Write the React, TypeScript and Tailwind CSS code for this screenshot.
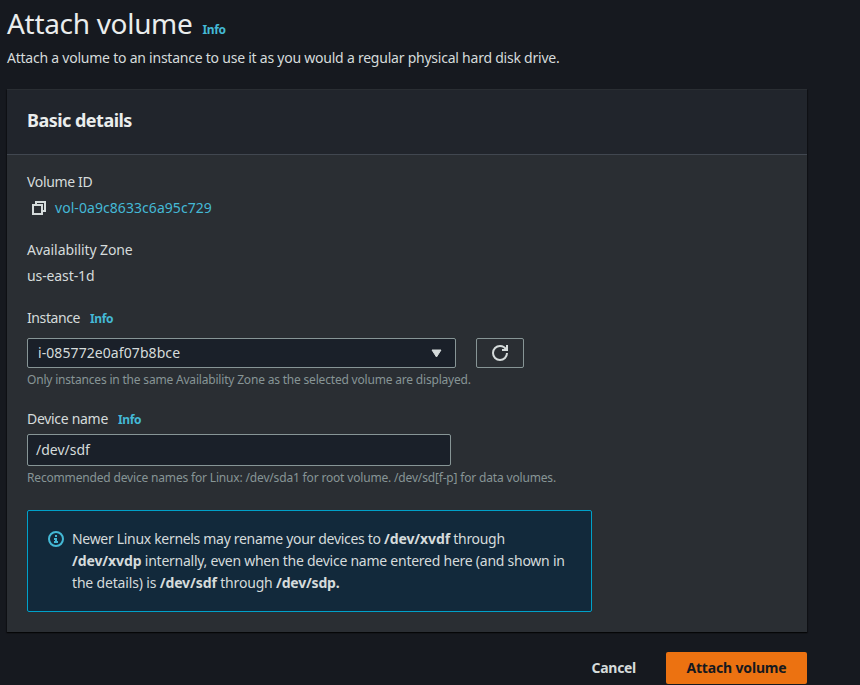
import type { ReactNode } from "react";

function Info({ className = "" }: { className?: string }) {
  return (
    <a className={`text-[12px] font-bold tracking-[-0.4px] text-[#44b9d6] ${className}`}>Info</a>
  );
}

function Line({ className = "", children }: { className?: string; children: ReactNode }) {
  return <div className={`whitespace-nowrap leading-[22px] ${className}`}>{children}</div>;
}

function CopyIcon() {
  return (
    <svg className="h-4 w-4 shrink-0" viewBox="0 0 16 16" fill="none" stroke="#d5dbdb" strokeWidth="2">
      <path d="M2 5h9v9H2zM5 5V2h9v9h-3" />
    </svg>
  );
}

function RefreshIcon() {
  return (
    <svg className="h-4 w-4 overflow-visible" viewBox="0 0 16 16" fill="none" stroke="#d5dbdb" strokeWidth="2">
      <path d="M15 8c0 3.870-3.130 7-7 7s-7-3.130-7-7 3.130-7 7-7c2.790 0 5.200 1.630 6.330 4" />
      <path d="M10 5h5V0" />
    </svg>
  );
}

function InfoIcon() {
  return (
    <svg className="mt-[3px] h-4 w-4 shrink-0" viewBox="0 0 16 16" fill="none" stroke="#44b9d6" strokeWidth="2">
      <circle cx="8" cy="8" r="7" />
      <path d="M7 5h2M6 8h2v3M6 11h4" />
    </svg>
  );
}

export default function App() {
  return (
    <main className="h-[685px] w-[860px] overflow-hidden bg-[#16191f] pl-[7px] font-['Noto_Sans','Open_Sans',sans-serif] text-[14px] text-[#d5dbdb]">
      <header className="flex h-[89px] flex-col pt-[5px]">
        <div className="flex items-baseline">
          <h1 className="text-[28px] leading-9 tracking-[-0.31px] text-[#eaeded]">Attach volume</h1>
          <Info className="ml-[10px]" />
        </div>
        <Line className="mt-[6px] tracking-[-0.232px]">
          Attach a volume to an instance to use it as you would a regular physical hard disk drive.
        </Line>
      </header>
      <section className="h-[543px] w-[800px] bg-[#2a2e33] shadow-[0_1px_1px_0_#0008,1px_1px_1px_0_#0004,-1px_1px_1px_0_#0004]">
        <div className="flex h-[66px] items-center border-t border-b border-t-[#2a2e33] border-b-[#414750] bg-[#21252c] px-5 pb-1">
          <h2 className="text-[18px] leading-[22px] font-bold tracking-[-0.52px] text-[#eaeded]">Basic details</h2>
        </div>
        <div className="flex flex-col px-5 pt-4">
          <Line className="tracking-[-0.35px]">Volume ID</Line>
          <Line className="mt-1 flex items-center gap-2 pl-1">
            <CopyIcon />
            <a className="tracking-[0.06px] text-[#44b9d6]">vol-0a9c8633c6a95c729</a>
          </Line>
          <Line className="mt-5 tracking-[-0.1px]">Availability Zone</Line>
          <Line className="mt-1 tracking-[-0.1px]">us-east-1d</Line>
          <Line className="mt-5">
            <span className="tracking-[-0.4px]">Instance</span>
            <Info className="ml-[10px]" />
          </Line>
          <div className="mt-2 flex gap-5">
            <div className="flex h-[30px] w-[429px] items-center justify-between rounded-[2px] border border-[#879596] bg-[#1a2029] pr-[13px] pl-[10px]">
              <span className="pb-px tracking-[0.08px]">i-085772e0af07b8bce</span>
              <svg className="h-[9px] w-[11px]" viewBox="0 0 11 9" fill="#d5dbdb" stroke="#d5dbdb" strokeLinejoin="round">
                <path d="M1 1h9L5.5 8z" />
              </svg>
            </div>
            <button className="flex h-[30px] w-12 items-center justify-center rounded-[2px] border border-[#879596]">
              <RefreshIcon />
            </button>
          </div>
          <Line className="mt-[1px] text-[12px] tracking-[-0.19px] text-[#879596]">
            Only instances in the same Availability Zone as the selected volume are displayed.
          </Line>
          <Line className="mt-[17px]">
            <span className="tracking-[-0.3px]">Device name</span>
            <Info className="ml-[10px]" />
          </Line>
          <div className="mt-[3px] flex h-8 w-[424px] items-center rounded-[2px] border border-[#879596] bg-[#1a2029] px-2">
            <span className="pb-px">/dev/sdf</span>
          </div>
          <Line className="mt-[1px] text-[12px] tracking-[-0.17px] text-[#879596]">
            Recommended device names for Linux: /dev/sda1 for root volume. /dev/sd[f-p] for data volumes.
          </Line>
          <div className="mt-[21px] flex h-[102px] w-[565px] gap-2 rounded-[2px] border border-[#00a1c9] bg-[#12293b] pt-[17px] pl-5">
            <InfoIcon />
            <div>
              <Line className="tracking-[-0.31px]">Newer Linux kernels may rename your devices to <b className="tracking-[-0.1px]">/dev/xvdf</b> through</Line>
              <Line className="tracking-[-0.25px]"><b className="tracking-[-0.1px]">/dev/xvdp</b> internally, even when the device name entered here (and shown in</Line>
              <Line className="tracking-[-0.17px]">the details) is <b className="tracking-[-0.1px]">/dev/sdf</b> through <b className="tracking-[-0.2px]">/dev/sdp.</b></Line>
            </div>
          </div>
        </div>
      </section>
      <footer className="mt-5 flex w-[800px] items-center justify-end gap-[30px] font-bold">
        <button className="pb-px tracking-[-0.3px]">Cancel</button>
        <button className="h-8 w-[141px] rounded-[2px] bg-[#ec7211] pb-px tracking-[-0.16px] text-[#16191f]">Attach volume</button>
      </footer>
    </main>
  );
}
